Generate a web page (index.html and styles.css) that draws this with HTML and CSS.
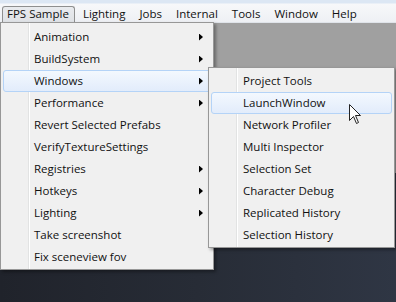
FILE: index.html
```html
<!DOCTYPE html>
<html lang="en">
  <head>
    <meta charset="UTF-8" />
    <meta name="viewport" content="width=device-width, initial-scale=1.0" />
    <title>FPS Sample menu</title>
    <link rel="stylesheet" href="styles.css">
  </head>
  <body>
    <div class="menubar">
      <div class="menubar-item active">FPS Sample</div>
      <div class="menubar-item">Lighting</div>
      <div class="menubar-item">Jobs</div>
      <div class="menubar-item">Internal</div>
      <div class="menubar-item">Tools</div>
      <div class="menubar-item">Window</div>
      <div class="menubar-item">Help</div>
    </div>

    <div class="workspace">
      <div class="panel"></div>
      <div class="scene"></div>
    </div>

    <div class="menu main-menu">
      <div class="menu-item"><span class="label">Animation</span><span class="arrow"></span></div>
      <div class="menu-item"><span class="label">BuildSystem</span><span class="arrow"></span></div>
      <div class="menu-item hover"><span class="label">Windows</span><span class="arrow"></span></div>
      <div class="menu-item"><span class="label">Performance</span><span class="arrow"></span></div>
      <div class="menu-item"><span class="label">Revert Selected Prefabs</span></div>
      <div class="menu-item"><span class="label">VerifyTextureSettings</span></div>
      <div class="menu-item"><span class="label">Registries</span><span class="arrow"></span></div>
      <div class="menu-item"><span class="label">Hotkeys</span><span class="arrow"></span></div>
      <div class="menu-item"><span class="label">Lighting</span><span class="arrow"></span></div>
      <div class="menu-item"><span class="label">Take screenshot</span></div>
      <div class="menu-item"><span class="label">Fix sceneview fov</span></div>
    </div>

    <div class="menu sub-menu">
      <div class="menu-item"><span class="label">Project Tools</span></div>
      <div class="menu-item hover"><span class="label">LaunchWindow</span></div>
      <div class="menu-item"><span class="label">Network Profiler</span></div>
      <div class="menu-item"><span class="label">Multi Inspector</span></div>
      <div class="menu-item"><span class="label">Selection Set</span></div>
      <div class="menu-item"><span class="label">Character Debug</span></div>
      <div class="menu-item"><span class="label">Replicated History</span></div>
      <div class="menu-item"><span class="label">Selection History</span></div>
    </div>

    <svg class="cursor" width="13" height="21" viewBox="0 0 13 21">
      <path d="M0.5 0.5 L0.5 16.5 L4.5 12.5 L7.5 19.5 L9.5 18.5 L6.5 11.5 L11.5 11.5 Z" fill="#fff" stroke="#222" stroke-width="1" stroke-linejoin="miter" />
    </svg>
  </body>
</html>
```

FILE: styles.css
```css
body {
  margin: 0;
  padding: 0;
  width: 396px;
  height: 302px;
  overflow: hidden;
  font-family: "Open Sans", "Noto Sans", sans-serif;
  font-size: 11.5px;
  color: #111;
  position: relative;
  background-color: #23262e;
}

.menubar {
  display: flex;
  gap: 3px;
  height: 23px;
  padding: 0 0 0 2px;
  box-sizing: border-box;
  align-items: flex-end;
  background: linear-gradient(#dce7f4 0, #dce7f4 3px, #f7f8fa 4px, #eef0f4 22px);
  border-bottom: 1px solid #dfe3e9;
}

.menubar-item {
  height: 15px;
  line-height: 14px;
  padding: 0 5px 0 4px;
  border: 1px solid transparent;
  border-bottom: 0;
  border-radius: 3px 3px 0 0;
  white-space: nowrap;
}

.menubar-item.active {
  border-color: #8e8f8f;
  background: linear-gradient(#e9ebee, #dfe2e6);
}

.workspace {
  display: flex;
  flex-direction: column;
  height: 279px;
}

.panel {
  height: 150px;
  background-color: #a0a0a0;
}

.scene {
  flex: 1;
  background: linear-gradient(to right, #20232b 0%, #272c36 50%, #2f3644 100%);
}

.menu {
  position: absolute;
  box-sizing: border-box;
  background-color: #f0f0f0;
  background-image: linear-gradient(to right, transparent 27px, #e2e3e3 27px, #e2e3e3 28px, #fff 28px, #fff 29px, transparent 29px);
  border: 1px solid #979797;
  box-shadow: 2px 2px 3px rgba(0, 0, 0, 0.35);
}

.main-menu {
  left: 0;
  top: 22px;
  width: 214px;
  padding: 3px 2px 1px 2px;
}

.sub-menu {
  left: 208px;
  top: 67px;
  width: 187px;
  padding: 2px 2px 1px 2px;
}

.menu-item {
  display: flex;
  align-items: center;
  height: 22px;
  box-sizing: border-box;
  padding: 0 7px 1px 30px;
  border: 1px solid transparent;
  border-radius: 3px;
  white-space: nowrap;
}

.sub-menu .menu-item {
  padding-left: 31px;
}

.menu-item .label {
  flex: 1;
}

.menu-item.hover {
  border-color: #b4d3f7;
  background: linear-gradient(#f3f8fe, #e2ecfb);
}

.arrow {
  width: 4px;
  height: 7px;
  margin-top: 1px;
  background-color: #000;
  clip-path: polygon(0 0, 100% 50%, 0 100%);
}

.cursor {
  position: absolute;
  left: 349px;
  top: 104px;
}
```
